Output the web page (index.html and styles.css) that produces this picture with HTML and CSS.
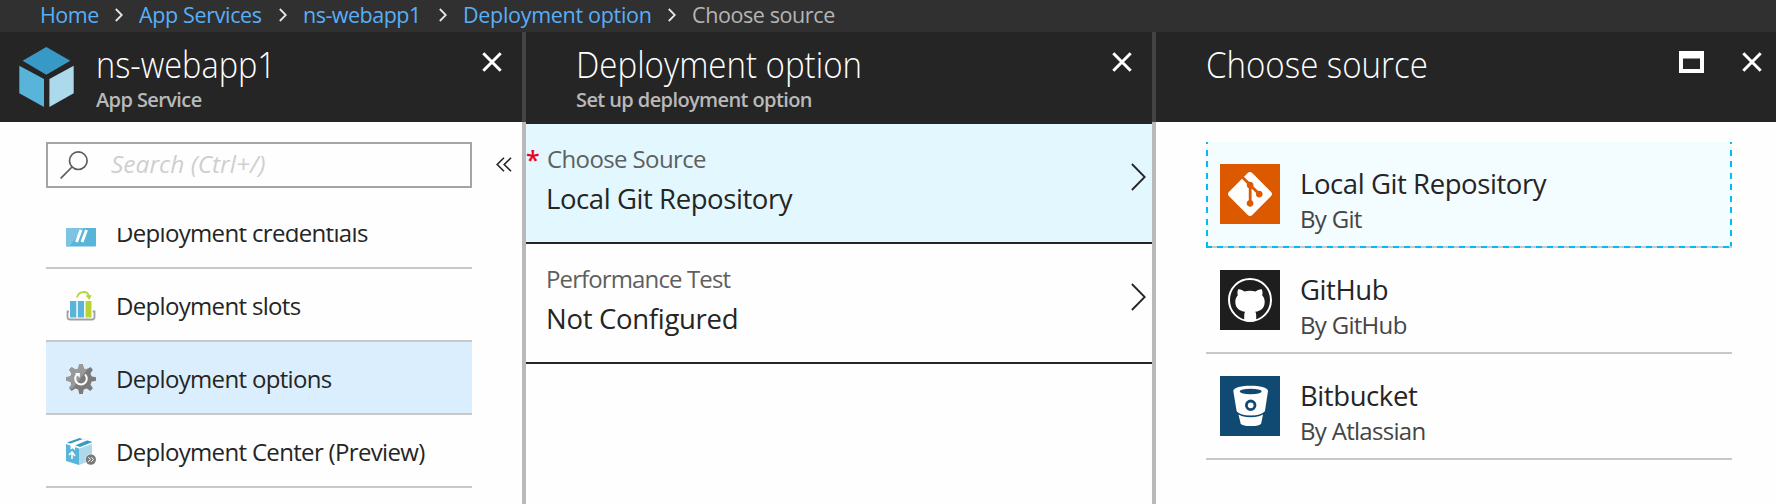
FILE: index.html
```html
<!DOCTYPE html>
<html lang="en">
<head>
<meta charset="utf-8">
<title>Choose source</title>
<link rel="stylesheet" href="styles.css">
</head>
<body>
<nav class="crumbs">
  <a class="crumb c-home">Home</a>
  <svg class="sep" viewBox="0 0 8 14"><path d="M.8 1l6 6-6 6"/></svg>
  <a class="crumb c-services">App Services</a>
  <svg class="sep" viewBox="0 0 8 14"><path d="M.8 1l6 6-6 6"/></svg>
  <a class="crumb c-app">ns-webapp1</a>
  <svg class="sep" viewBox="0 0 8 14"><path d="M.8 1l6 6-6 6"/></svg>
  <a class="crumb c-deploy">Deployment option</a>
  <svg class="sep" viewBox="0 0 8 14"><path d="M.8 1l6 6-6 6"/></svg>
  <span class="crumb current">Choose source</span>
</nav>
<main class="blades">
  <section class="blade blade-app">
    <header class="head">
      <svg class="cube" viewBox="0 0 56 60"><path fill="#3999c6" d="M27.3 0l24 13.7-24 14-23.7-14z"/><path fill="#59b4d9" d="M.3 18.7L25 32v28L.3 46.3z"/><path fill="#acd9ec" d="M30.4 32l24.3-13.3v27.6L30.4 60z"/></svg>
      <div class="heading"><h1 class="title t-app">ns-webapp1</h1><p class="sub">App Service</p></div>
      <svg class="close" viewBox="0 0 20 20"><path d="M1.3 1.3l17.4 17.4M18.7 1.3L1.3 18.7"/></svg>
    </header>
    <div class="search-row">
      <div class="search">
        <svg class="lens" viewBox="0 0 28 28"><circle cx="18.3" cy="9.7" r="8.8"/><path d="M12 16L.7 27.3"/></svg>
        <span class="placeholder">Search (Ctrl+/)</span>
      </div>
      <svg class="collapse" viewBox="0 0 16 15"><path d="M8 .8L1.2 7.5 8 14.2M15 .8L8.2 7.5l6.8 6.7"/></svg>
    </div>
    <div class="menu-clip">
      <ul class="menu">
        <li class="item">
          <svg class="icon" viewBox="0 0 30 30"><rect y="4" width="30" height="24.500" rx="1" fill="#59b4d9"/><path fill="#7cc4e1" d="M0 5a1 1 0 0 1 1-1h22L3 28.500H1a1 1 0 0 1-1-1z"/><path stroke="#fff" stroke-width="3" d="M15 12l-4.500 12M20.500 12L16 24"/></svg>
          <span class="label">Deployment credentials</span>
        </li>
        <li class="item">
          <svg class="icon" viewBox="0 0 30 30"><path fill="none" stroke="#a0a1a2" stroke-width="1.800" d="M3.500 20.500H1.500v5.500q0 2.500 2.500 2.500h22q2.500 0 2.500-2.500v-5.500h-2"/><path fill="#fff" d="M3 9h23.500v18H3z"/><path fill="#59b4d9" d="M4 10h6.300V26.500H4zM11.800 10h6.300V26.500h-6.300z"/><path fill="#b8d432" d="M19.500 10h6V26.500h-6z"/><path fill="none" stroke="#b8d432" stroke-width="1.800" d="M11 6.500C12.500-.3 21.500-.8 22.800 5"/><path fill="#b8d432" d="M19.500 4.500l6-.5-2 5z"/></svg>
          <span class="label">Deployment slots</span>
        </li>
        <li class="item selected">
          <svg class="icon" viewBox="0 0 30 30"><g fill="#7a7a7a"><circle cx="15" cy="15" r="10.800"/><g id="teeth"><path d="M12.200 5l1-5h3.600l1 5zM12.200 25l1 5h3.600l1-5zM5 12.200l-5 1v3.600l5 1zM25 12.200l5 1v3.600l-5 1z"/></g><use href="#teeth" transform="rotate(45 15 15)"/></g><path fill="#999" d="M13.200 0h3.600l1 4.500 2 .8L22.500 4 7.300 23.700l-1.600 1.500-2.300-2.500L6 20l-1.500-2.200L0 16.800v-3.600l4.700-1L5.800 10l-2.500-4 2.500-2.600L10 5.500l2.200-1z"/><path fill="none" stroke="#fff" stroke-width="2" d="M11 10.500a5.800 5.800 0 1 0 8 0"/><path fill="#fff" d="M9 9h4.800v4.800z"/></svg>
          <span class="label">Deployment options</span>
        </li>
        <li class="item">
          <svg class="icon" viewBox="0 0 30 30"><path fill="#3999c6" d="M1 5.500L13.500 1l13 4-12.500 5z"/><path fill="#59b4d9" d="M0 7l13 4.500V28L0 24z"/><path fill="#acd9ec" d="M13 11.500L26 7v16L13 28z"/><path fill="#fff" d="M4.500 6.500L17 2l4.500 1.300L9 8.500v4.700l-2.200-2-2.300 1.200z"/><path fill="none" stroke="#fff" stroke-width="1.500" d="M6 22v-6.500M3 18l3-3 3 4"/><circle cx="24.800" cy="22.500" r="5.700" fill="#fff"/><circle cx="24.800" cy="22.500" r="5.200" fill="#7a7a7a"/><path fill="none" stroke="#fff" stroke-width="1" d="M22.300 20.200l2.200 2.300-2.200 2.300M25.300 20.200l2.200 2.300-2.200 2.300"/></svg>
          <span class="label">Deployment Center (Preview)</span>
        </li>
      </ul>
    </div>
  </section>

  <section class="blade blade-option">
    <header class="head">
      <div class="heading"><h1 class="title">Deployment option</h1><p class="sub">Set up deployment option</p></div>
      <svg class="close" viewBox="0 0 20 20"><path d="M1.3 1.3l17.4 17.4M18.7 1.3L1.3 18.7"/></svg>
    </header>
    <div class="field active">
      <span class="required">*</span>
      <div class="field-text"><div class="field-name choose">Choose Source</div><div class="field-value">Local Git Repository</div></div>
      <svg class="next" viewBox="0 0 15 28"><path d="M.9 1l12.800 13L.9 27"/></svg>
    </div>
    <div class="field">
      <div class="field-text"><div class="field-name perf">Performance Test</div><div class="field-value nc">Not Configured</div></div>
      <svg class="next" viewBox="0 0 15 28"><path d="M.9 1l12.800 13L.9 27"/></svg>
    </div>
  </section>

  <section class="blade blade-source">
    <header class="head">
      <div class="heading"><h1 class="title">Choose source</h1></div>
      <svg class="maximize" viewBox="0 0 25 22"><path fill="#fff" fill-rule="evenodd" d="M0 0h25v22H0zM4 7.500V18h17V7.500z"/></svg>
      <svg class="close" viewBox="0 0 20 20"><path d="M1.300 1.300l17.400 17.400M18.700 1.300L1.300 18.700"/></svg>
    </header>
    <div class="sources">
      <div class="source picked">
        <svg class="logo" viewBox="0 0 60 60"><rect width="60" height="60" fill="#dd5900"/><path fill="#fff" transform="translate(8 8) scale(1.833)" d="M23.546 10.93L13.067.452c-.604-.603-1.582-.603-2.188 0L8.708 2.627l2.760 2.760c.645-.215 1.379-.070 1.889.441.516.515.658 1.258.438 1.900l2.658 2.660c.645-.223 1.387-.078 1.900.435.721.720.721 1.884 0 2.604-.719.719-1.881.719-2.600 0-.539-.541-.674-1.337-.404-1.996L12.860 8.955v6.525c.176.086.342.203.488.348.713.721.713 1.883 0 2.600-.719.721-1.889.721-2.609 0-.719-.719-.719-1.879 0-2.598.182-.180.387-.316.605-.406V8.835c-.217-.091-.424-.222-.600-.401-.545-.545-.676-1.342-.396-2.009L7.636 3.700.450 10.881c-.600.605-.600 1.584 0 2.189l10.480 10.477c.604.604 1.582.604 2.186 0l10.430-10.430c.605-.603.605-1.582 0-2.187"/></svg>
        <div class="source-text"><div class="source-name">Local Git Repository</div><div class="source-by">By Git</div></div>
      </div>
      <div class="source">
        <svg class="logo" viewBox="0 0 60 60"><rect width="60" height="60" fill="#1e1e1e"/><circle cx="30" cy="30" r="21" fill="none" stroke="#fff" stroke-width="2"/><path fill="#fff" d="M18.200 19.200c2.300-.2 4.700 1.200 6.300 2.300 3.500-.9 7.500-.9 11 0 1.600-1.100 4-2.500 6.300-2.300 1 2.300.8 4.500.4 6 1.700 2 2.500 4 2.500 6.600 0 6.500-3.800 9.300-9.500 10 .8 1 1 2.300 1 4v5c-4 1.200-8 1.200-12 0v-5c0-1.700.3-3 1-4-5.700-.7-9.900-3.500-9.900-10 0-2.600.9-4.700 2.500-6.600-.5-1.500-.6-3.700.4-6z"/></svg>
        <div class="source-text"><div class="source-name">GitHub</div><div class="source-by">By GitHub</div></div>
      </div>
      <div class="source">
        <svg class="logo" viewBox="0 0 60 60"><rect width="60" height="60" fill="#104971"/><path fill="#fff" d="M13.300 15c0-7 34.700-7 34.700 0l-3.200 21c-3 5.200-25 5.200-28 0z"/><ellipse cx="30.700" cy="15.500" rx="11" ry="2.700" fill="#104971"/><circle cx="30.700" cy="29.300" r="4.300" fill="none" stroke="#104971" stroke-width="2.800"/><path fill="#fff" stroke="#104971" stroke-width="1.600" d="M17.200 36.800c6 4.700 21 4.700 27 0l-2.300 11c-2.500 4-19.500 4-22 0z"/></svg>
        <div class="source-text"><div class="source-name">Bitbucket</div><div class="source-by">By Atlassian</div></div>
      </div>
    </div>
  </section>
</main>
</body>
</html>
```

FILE: styles.css
```css
* { box-sizing: border-box; }
body {
  margin: 0;
  height: 504px;
  overflow: hidden;
  display: flex;
  flex-direction: column;
  background: #fefefe;
  color: #252525;
  font-family: "Open Sans", "Noto Sans", sans-serif;
}
h1, p, ul { margin: 0; padding: 0; font-weight: 400; list-style: none; }
svg { display: block; flex: none; }

/* Breadcrumb bar */
.crumbs {
  flex: none;
  display: flex;
  align-items: center;
  gap: 16px;
  height: 32px;
  padding-left: 40px;
  background: #303030;
  font-size: 21.5px;
  line-height: 29px;
  font-weight: 450;
  white-space: nowrap;
}
.crumb { color: #57aff9; margin-top: -3px; }
.c-home { width: 59px; letter-spacing: -.5px; }
.c-services { width: 124px; letter-spacing: -.35px; }
.c-app { width: 120px; letter-spacing: -.5px; }
.c-deploy { width: 189px; letter-spacing: -.3px; }
.current { color: #b5b5b5; letter-spacing: -.4px; }
.sep { width: 8px; height: 14px; margin-top: -2px; }
.sep path { fill: none; stroke: #e6e6e6; stroke-width: 1.8; }

/* Blades */
.blades { flex: 1; display: flex; min-height: 0; }
.blade { flex: none; display: flex; flex-direction: column; }
.blade-app { width: 526px; }
.blade-option { width: 630px; }
.blade-source { width: 620px; }
.blade-app, .blade-option {
  border-right: 4px solid;
  border-image: linear-gradient(#444 90px, #b9b9b9 90px) 0 4 0 0;
}
.head {
  flex: none;
  display: flex;
  align-items: flex-start;
  height: 90px;
  padding-right: 20px;
  background: #252525;
}
.blade-option .head { height: 92px; padding: 0 20px 0 50px; }
.blade-source .head { padding: 0 14px 0 50px; }
.heading { flex: 1; min-width: 0; padding-top: 10px; white-space: nowrap; }
.title {
  color: #fff;
  font-size: 36.5px;
  line-height: 44px;
  font-weight: 350;
  transform: scaleX(.905);
  transform-origin: left;
}
.t-app { transform: scaleX(.89); }
.sub {
  margin-top: 1px;
  color: #b9b9b9;
  font-size: 20px;
  line-height: 26px;
  font-weight: 650;
  letter-spacing: -.6px;
}
.cube { width: 56px; height: 60px; margin: 15px 21px 0 19px; }
.close { width: 20px; height: 20px; margin-top: 20px; }
.close path { stroke: #fff; stroke-width: 3; }
.maximize { width: 25px; height: 22px; margin: 19px 38px 0 0; }

/* Search */
.search-row { flex: none; display: flex; align-items: center; padding: 20px 10px 0 46px; }
.search {
  display: flex;
  align-items: center;
  width: 426px;
  height: 46px;
  padding-left: 12px;
  border: 2px solid #a5a5a5;
}
.lens { width: 28px; height: 28px; }
.lens circle, .lens path { fill: none; stroke: #5c5c5c; stroke-width: 1.7; }
.placeholder {
  margin: -2px 0 0 23px;
  color: #cfcfcf;
  font-size: 24.5px;
  line-height: 30px;
  font-style: italic;
}
.collapse { width: 16px; height: 15px; margin: -2px 0 0 24px; }
.collapse path { fill: none; stroke: #252525; stroke-width: 1.6; }

/* Service menu, scrolled part-way */
.menu-clip { flex: 1; min-height: 0; margin: 40px 50px 0 46px; overflow: hidden; }
.menu { margin-top: -32px; }
.item {
  display: flex;
  align-items: center;
  height: 73px;
  padding-left: 20px;
  border-bottom: 2px solid #c8c8c8;
}
.selected { background: #dbeefe; }
.icon { width: 30px; height: 30px; margin-top: 3px; }
.label {
  margin: 2px 0 0 20px;
  font-size: 24px;
  line-height: 32px;
  letter-spacing: -.67px;
  white-space: nowrap;
}

/* Deployment option fields */
.field {
  position: relative;
  display: flex;
  align-items: flex-start;
  height: 120px;
  padding: 18px 6px 0 20px;
  border-bottom: 2px solid #252525;
}
.active { background: #e2f7fe; }
.required {
  position: absolute;
  left: 0;
  top: 17px;
  color: #f0001e;
  font-size: 25px;
  line-height: 36px;
  font-weight: 600;
}
.field-text { flex: 1; }
.field-name { color: #5f5f5f; font-size: 24px; line-height: 34px; letter-spacing: -.54px; }
.choose { padding-left: 1px; letter-spacing: -.62px; }
.perf { letter-spacing: -.88px; }
.field-value { margin-top: 4px; font-size: 27.5px; line-height: 38px; letter-spacing: -.42px; }
.nc { letter-spacing: -.3px; }
.next { width: 15px; height: 28px; margin-top: 21px; }
.next path { fill: none; stroke: #252525; stroke-width: 1.8; }

/* Source list */
.sources { margin: 20px 44px 0 50px; }
.source {
  display: flex;
  align-items: flex-start;
  gap: 20px;
  height: 106px;
  padding: 22px 0 0 14px;
  border-bottom: 2px solid #c8c8c8;
}
.picked {
  --dash: #00bcf2;
  border-bottom: 0;
  background:
    repeating-linear-gradient(90deg, var(--dash) 0 6px, #c8c8c8 6px 11px) 0 100% / 100% 2px no-repeat,
    repeating-linear-gradient(0deg, var(--dash) 0 6px, transparent 6px 11.5px) 0 0 / 2px 100% no-repeat,
    repeating-linear-gradient(0deg, var(--dash) 0 6px, transparent 6px 11.5px) 100% 0 / 2px 100% no-repeat,
    #f3fcff;
}
.logo { width: 60px; height: 60px; }
.source-text { padding-top: 1px; }
.source-name { font-size: 27.5px; line-height: 38px; letter-spacing: -.42px; }
.source-by { color: #454545; font-size: 24px; line-height: 32px; letter-spacing: -.7px; }
```
